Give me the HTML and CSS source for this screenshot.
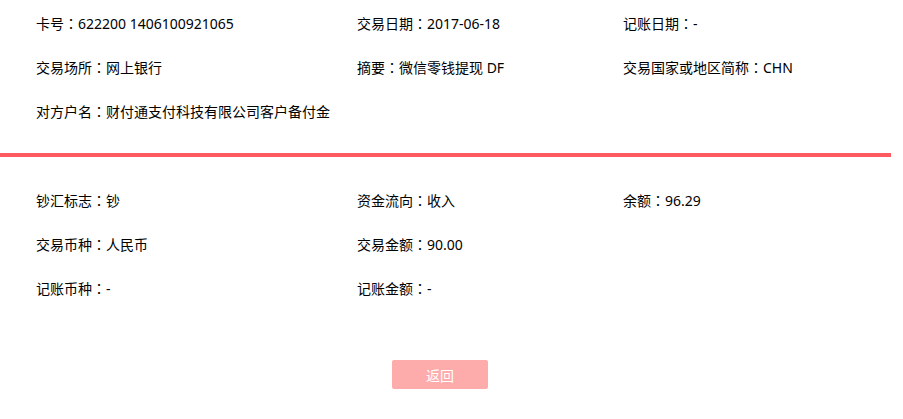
FILE: index.html
```html
<!DOCTYPE html>
<html lang="zh-CN">
<head>
    <meta charset="UTF-8">
    <meta name="viewport" content="width=device-width, initial-scale=1.0">
    <title>交易明细</title>
    <link rel="stylesheet" href="styles.css">
</head>
<body>
    <div class="container">
        <div class="info-block top">
            <div class="item">卡号<span class="sep" lang="zh-TW">：</span>622200 1406100921065</div>
            <div class="item">交易日期<span class="sep" lang="zh-TW">：</span>2017-06-18</div>
            <div class="item">记账日期<span class="sep" lang="zh-TW">：</span>-</div>
            <div class="item">交易场所<span class="sep" lang="zh-TW">：</span>网上银行</div>
            <div class="item">摘要<span class="sep" lang="zh-TW">：</span>微信零钱提现 DF</div>
            <div class="item">交易国家或地区简称<span class="sep" lang="zh-TW">：</span>CHN</div>
            <div class="item">对方户名<span class="sep" lang="zh-TW">：</span>财付通支付科技有限公司客户备付金</div>
        </div>
        <div class="divider"></div>
        <div class="info-block bottom">
            <div class="item">钞汇标志<span class="sep" lang="zh-TW">：</span>钞</div>
            <div class="item">资金流向<span class="sep" lang="zh-TW">：</span>收入</div>
            <div class="item">余额<span class="sep" lang="zh-TW">：</span>96.29</div>
            <div class="item">交易币种<span class="sep" lang="zh-TW">：</span>人民币</div>
            <div class="item">交易金额<span class="sep" lang="zh-TW">：</span>90.00</div>
            <div class="item"></div>
            <div class="item">记账币种<span class="sep" lang="zh-TW">：</span>-</div>
            <div class="item">记账金额<span class="sep" lang="zh-TW">：</span>-</div>
        </div>
        <div class="actions">
            <button class="back-button">返回</button>
        </div>
    </div>
</body>
</html>
```

FILE: styles.css
```css
body{
    margin: 0;
    font-family: "Noto Sans", "Noto Sans CJK SC", sans-serif;
    font-size: 14px;
    color: #000;
    background: #fff;
}
.container{
    width: 891px;
}
.info-block{
    display: grid;
    grid-template-columns: 321px 266px 1fr;
    padding-left: 36px;
}
.info-block.top{
    padding-top: 1px;
    padding-bottom: 20px;
}
.info-block.bottom{
    padding-top: 21px;
}
.item{
    height: 44px;
    line-height: 44px;
    white-space: nowrap;
}
.sep{
    font-family: "Noto Sans CJK TC", sans-serif;
}
.divider{
    height: 4px;
    background: #ff5a5f;
}
.actions{
    display: flex;
    justify-content: center;
    padding-top: 50px;
    padding-right: 11px;
}
.back-button{
    width: 96px;
    height: 29px;
    border: none;
    border-radius: 2px;
    background: #feabab;
    color: #fff;
    font-family: "Noto Sans CJK SC", sans-serif;
    font-size: 14px;
    padding: 0;
}
```
